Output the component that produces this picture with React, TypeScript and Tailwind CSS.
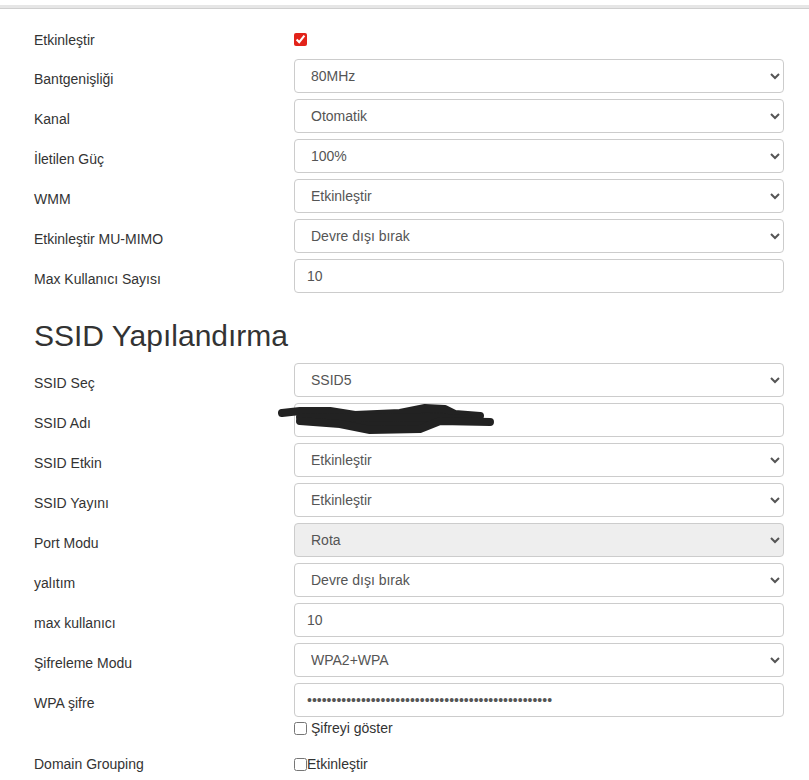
import React from "react";

const font = { fontFamily: '"Liberation Sans", Arial, sans-serif' };

const selectCls =
  "block h-[34px] w-full rounded-[4px] border border-[#ccc] bg-white px-3 py-[6px] text-[14px] text-[#555]";
const inputCls =
  "block h-[34px] w-full rounded-[4px] border border-[#ccc] bg-white px-3 py-[6px] text-[14px] text-[#555]";

function Row({ label, children }: { label: string; children: React.ReactNode }) {
  return (
    <div className="flex items-start">
      <div className="w-[260px] shrink-0 pt-[10px] text-[14px] leading-5 text-[#333]">{label}</div>
      <div className="relative w-[490px]">{children}</div>
    </div>
  );
}

function Select({ value, disabled }: { value: string; disabled?: boolean }) {
  return (
    <select
      defaultValue={value}
      disabled={disabled}
      className={selectCls + (disabled ? " !bg-[#eee] opacity-100" : "")}
      style={font}
    >
      <option>{value}</option>
    </select>
  );
}

// redaction mark over the SSID name
function Scribble() {
  return (
    <svg className="pointer-events-none absolute left-[-16px] top-0 h-[34px] w-[220px]" viewBox="0 0 220 34">
      <path
        d="M22 9 L52 8 L77 12 L122 10 L147 6 L167 7 L177 12 L200 13 L212 19 L162 19 L142 26 L92 28 L62 22 L22 19 Z"
        fill="#222"
      />
      <g fill="none" stroke="#222" strokeWidth="8" strokeLinecap="round" strokeLinejoin="round">
        <path d="M4 10 L22 8 L52 8 L77 12 L122 10 L147 5 L167 6 L177 11 L202 13" />
        <path d="M22 14 L80 15 L150 14 L190 16" />
        <path d="M22 18 L62 21 L92 27 L142 26 L162 18 L212 19" />
      </g>
    </svg>
  );
}

export default function App() {
  return (
    <div className="min-h-screen bg-white" style={font}>
      <div className="pt-[5px]">
        <div className="h-[4px] border-b border-[#cfcfcf] bg-[#e6e6e6]" />
      </div>

      <div className="pl-[34px]">
        <div className="mt-[10px] flex h-[34px] items-start">
          <div className="w-[260px] shrink-0 pt-[11px] text-[14px] leading-5 text-[#333]">Etkinleştir</div>
          <input type="checkbox" defaultChecked className="mt-[14px] h-[13px] w-[13px] accent-[#e2231a]" />
        </div>

        <div className="mt-[6px] flex flex-col gap-[6px]">
          <Row label="Bantgenişliği"><Select value="80MHz" /></Row>
          <Row label="Kanal"><Select value="Otomatik" /></Row>
          <Row label="İletilen Güç"><Select value="100%" /></Row>
          <Row label="WMM"><Select value="Etkinleştir" /></Row>
          <Row label="Etkinleştir MU-MIMO"><Select value="Devre dışı bırak" /></Row>
          <Row label="Max Kullanıcı Sayısı">
            <input className={inputCls} style={font} defaultValue="10" />
          </Row>
        </div>

        <h2 className="mt-[26px] mb-[11px] text-[30px] leading-[33px] font-normal text-[#333]">SSID Yapılandırma</h2>

        <div className="flex flex-col gap-[6px]">
          <Row label="SSID Seç"><Select value="SSID5" /></Row>
          <Row label="SSID Adı">
            <input className={inputCls} style={font} defaultValue="" />
            <Scribble />
          </Row>
          <Row label="SSID Etkin"><Select value="Etkinleştir" /></Row>
          <Row label="SSID Yayını"><Select value="Etkinleştir" /></Row>
          <Row label="Port Modu"><Select value="Rota" disabled /></Row>
          <Row label="yalıtım"><Select value="Devre dışı bırak" /></Row>
          <Row label="max kullanıcı">
            <input className={inputCls} style={font} defaultValue="10" />
          </Row>
          <Row label="Şifreleme Modu"><Select value="WPA2+WPA" /></Row>
          <Row label="WPA şifre">
            <input type="password" className={inputCls} style={font} defaultValue={"x".repeat(50)} />
            <label className="mt-[1px] flex items-center text-[14px] leading-5 text-[#333]">
              <input type="checkbox" className="h-[13px] w-[13px]" />
              <span className="ml-[4px]">Şifreyi göster</span>
            </label>
          </Row>
          <Row label="Domain Grouping">
            <label className="flex items-center pt-[10px] text-[14px] leading-5 text-[#333]">
              <input type="checkbox" className="h-[13px] w-[13px]" />
              <span>Etkinleştir</span>
            </label>
          </Row>
        </div>
      </div>
    </div>
  );
}
